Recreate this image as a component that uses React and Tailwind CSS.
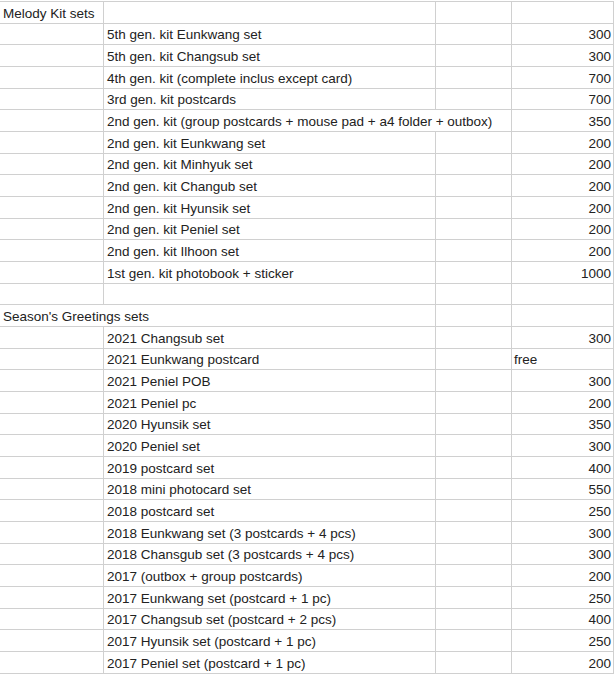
import React from "react";

const rows = [
  { h: "Melody Kit sets" },
  { n: "5th gen. kit Eunkwang set", p: "300" },
  { n: "5th gen. kit Changsub set", p: "300" },
  { n: "4th gen. kit (complete inclus except card)", p: "700" },
  { n: "3rd gen. kit postcards", p: "700" },
  { n: "2nd gen. kit (group postcards + mouse pad + a4 folder + outbox)", p: "350", wide: true },
  { n: "2nd gen. kit Eunkwang set", p: "200" },
  { n: "2nd gen. kit Minhyuk set", p: "200" },
  { n: "2nd gen. kit Changub set", p: "200" },
  { n: "2nd gen. kit Hyunsik set", p: "200" },
  { n: "2nd gen. kit Peniel set", p: "200" },
  { n: "2nd gen. kit Ilhoon set", p: "200" },
  { n: "1st gen. kit photobook + sticker", p: "1000" },
  {},
  { h: "Season's Greetings sets", hwide: true },
  { n: "2021 Changsub set", p: "300" },
  { n: "2021 Eunkwang postcard", free: "free" },
  { n: "2021 Peniel POB", p: "300" },
  { n: "2021 Peniel pc", p: "200" },
  { n: "2020 Hyunsik set", p: "350" },
  { n: "2020 Peniel set", p: "300" },
  { n: "2019 postcard set", p: "400" },
  { n: "2018 mini photocard set", p: "550" },
  { n: "2018 postcard set", p: "250" },
  { n: "2018 Eunkwang set (3 postcards + 4 pcs)", p: "300" },
  { n: "2018 Chansgub set (3 postcards + 4 pcs)", p: "300" },
  { n: "2017 (outbox + group postcards)", p: "200" },
  { n: "2017 Eunkwang set (postcard + 1 pc)", p: "250" },
  { n: "2017 Changsub set (postcard + 2 pcs)", p: "400" },
  { n: "2017 Hyunsik set (postcard + 1 pc)", p: "250" },
  { n: "2017 Peniel set (postcard + 1 pc)", p: "200" },
];

export default function App() {
  return (
    <div
      className="w-[614px] h-[677px] bg-white overflow-hidden pt-px text-[13.5px] text-[#222222]"
      style={{ fontFamily: '"Liberation Sans", Arial, sans-serif' }}
    >
      <div className="border-t border-[#d0d0d0]">
        {rows.map((r, i) => (
          <div key={i} className="flex h-[21.68px] border-b border-[#d0d0d0] leading-[15px]">
            <div
              className={
                "w-[104px] shrink-0 flex items-end pb-[2px] pl-[3px] whitespace-nowrap overflow-visible relative z-10 " +
                (r.hwide ? "" : "border-r border-[#d0d0d0]")
              }
            >
              {r.h || ""}
            </div>
            <div
              className={
                "w-[332px] shrink-0 flex items-end pb-[2px] pl-[3px] whitespace-nowrap overflow-visible " +
                (r.wide ? "" : "border-r border-[#d0d0d0]")
              }
            >
              {r.n || ""}
            </div>
            <div className="w-[76px] shrink-0 border-r border-[#d0d0d0]"></div>
            <div className="w-[102px] shrink-0 border-r border-[#d0d0d0] flex items-end justify-between pb-[2px] px-[2px]">
              <span>{r.free || ""}</span>
              <span>{r.p || ""}</span>
            </div>
          </div>
        ))}
      </div>
    </div>
  );
}
